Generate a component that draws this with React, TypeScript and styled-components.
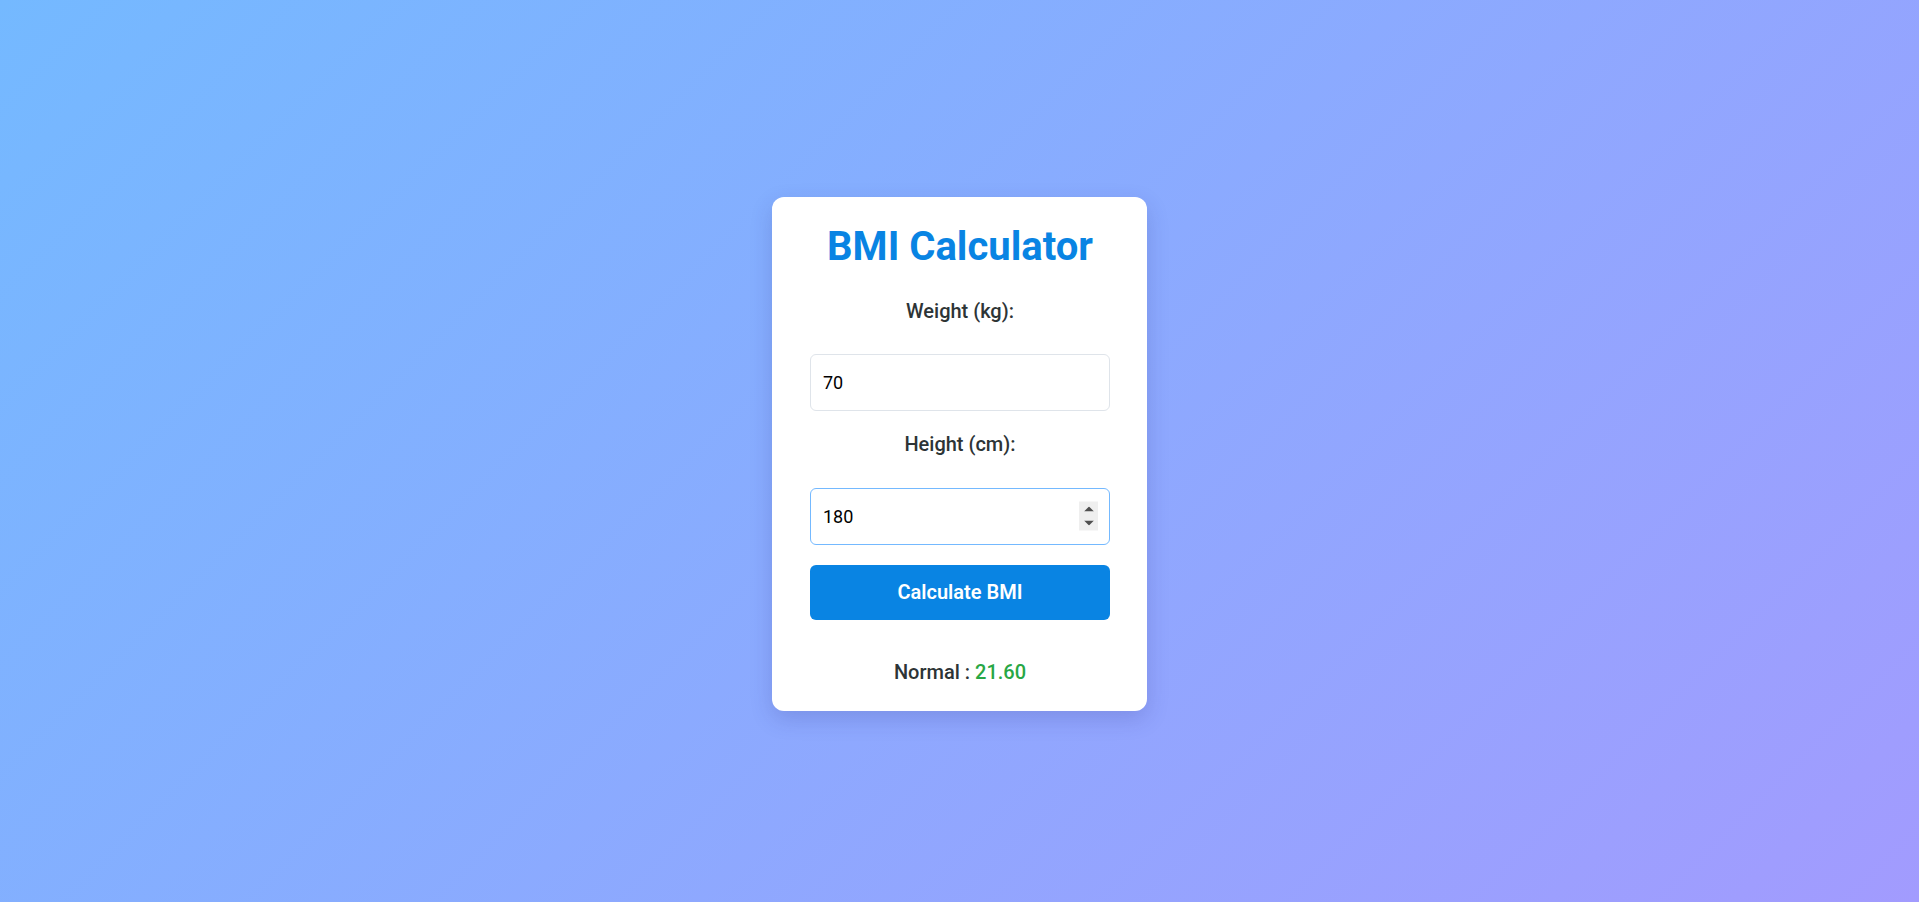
import React, { useEffect, useRef, useState } from "react";
import styled, { createGlobalStyle } from "styled-components";

const GlobalStyle = createGlobalStyle`
  html, body {
    margin: 0;
    padding: 0;
  }
  body {
    font-family: Roboto, "Liberation Sans", Arial, sans-serif;
    background: linear-gradient(135deg, #74b9ff, #a29bfe);
    min-height: 100vh;
  }
  * { box-sizing: border-box; }
`;

const Page = styled.main`
  min-height: 100vh;
  display: flex;
  align-items: center;
  justify-content: center;
`;

const Card = styled.section`
  width: 375px;
  margin-top: 5px;
  background: #ffffff;
  border-radius: 12px;
  box-shadow: 0 8px 22px rgba(40, 40, 120, 0.18);
  padding: 26px 37px 27px 38px;
  display: flex;
  flex-direction: column;
  align-items: stretch;
`;

const Title = styled.h1`
  margin: 0 0 29px;
  font-size: 40px;
  font-weight: 700;
  color: #0984e3;
  text-align: center;
  line-height: normal;
`;

const Label = styled.label<{ $gap: number }>`
  display: block;
  margin: 0 0 ${(p) => p.$gap}px;
  font-size: 20px;
  font-weight: 500;
  color: #2d3436;
  text-align: center;
  line-height: normal;
`;

const Field = styled.div<{ $after: number }>`
  position: relative;
  width: 300px;
  height: 57px;
  margin: 0 0 ${(p) => p.$after}px;
`;

const Input = styled.input`
  width: 100%;
  height: 100%;
  padding: 0 12px;
  font-family: Roboto, "Liberation Sans", Arial, sans-serif;
  font-size: 18px;
  color: #000;
  border: 1px solid #dfe4ea;
  border-radius: 6px;
  outline: none;
  background: #fff;
  -moz-appearance: textfield;
  &::-webkit-inner-spin-button,
  &::-webkit-outer-spin-button {
    -webkit-appearance: none;
    margin: 0;
  }
  &:focus {
    border-color: #74b9ff;
  }
`;

const Spinner = styled.div`
  position: absolute;
  right: 12px;
  top: 50%;
  transform: translateY(-50%);
  width: 19px;
  height: 29px;
  background: #efefef;
  display: flex;
  flex-direction: column;
`;

const SpinButton = styled.button`
  flex: 1;
  border: none;
  padding: 0;
  background: transparent;
  display: flex;
  align-items: center;
  justify-content: center;
  cursor: pointer;
  color: #505050;
`;

const Button = styled.button`
  width: 300px;
  height: 55px;
  margin: 0 0 40px;
  border: none;
  border-radius: 6px;
  background: #0984e3;
  color: #ffffff;
  font-family: Roboto, "Liberation Sans", Arial, sans-serif;
  font-size: 20px;
  font-weight: 600;
  cursor: pointer;
`;

const Result = styled.p`
  margin: 0;
  font-size: 20px;
  font-weight: 500;
  color: #2d3436;
  text-align: center;
  line-height: normal;
`;

const Value = styled.span`
  color: #28a745;
`;

function category(bmi: number): string {
  if (bmi < 18.5) return "Underweight";
  if (bmi < 25) return "Normal";
  if (bmi < 30) return "Overweight";
  return "Obese";
}

const Arrow = ({ up }: { up?: boolean }) => (
  <svg width="10" height="5" viewBox="0 0 10 5" aria-hidden="true">
    <path d={up ? "M0 5 L5 0 L10 5 Z" : "M0 0 L10 0 L5 5 Z"} fill="currentColor" />
  </svg>
);

export default function App() {
  const [weight, setWeight] = useState("70");
  const [height, setHeight] = useState("180");
  const [bmi, setBmi] = useState<number | null>(70 / (1.8 * 1.8));
  const heightRef = useRef<HTMLInputElement>(null);

  useEffect(() => {
    heightRef.current?.focus();
  }, []);

  const calculate = () => {
    const w = parseFloat(weight);
    const h = parseFloat(height) / 100;
    if (w > 0 && h > 0) setBmi(w / (h * h));
  };

  const step = (d: number) => {
    const v = parseFloat(height) || 0;
    setHeight(String(v + d));
  };

  return (
    <>
      <GlobalStyle />
      <Page>
        <Card>
          <Title>BMI Calculator</Title>
          <Label $gap={31} htmlFor="weight">Weight (kg):</Label>
          <Field $after={21}>
            <Input
              id="weight"
              type="number"
              value={weight}
              onChange={(e) => setWeight(e.target.value)}
            />
          </Field>
          <Label $gap={32} htmlFor="height">Height (cm):</Label>
          <Field $after={20}>
            <Input
              id="height"
              ref={heightRef}
              type="number"
              value={height}
              onChange={(e) => setHeight(e.target.value)}
            />
            <Spinner>
              <SpinButton type="button" aria-label="Increase" onClick={() => step(1)}>
                <Arrow up />
              </SpinButton>
              <SpinButton type="button" aria-label="Decrease" onClick={() => step(-1)}>
                <Arrow />
              </SpinButton>
            </Spinner>
          </Field>
          <Button onClick={calculate}>Calculate BMI</Button>
          {bmi !== null && (
            <Result>
              {category(bmi)} : <Value>{bmi.toFixed(2)}</Value>
            </Result>
          )}
        </Card>
      </Page>
    </>
  );
}
